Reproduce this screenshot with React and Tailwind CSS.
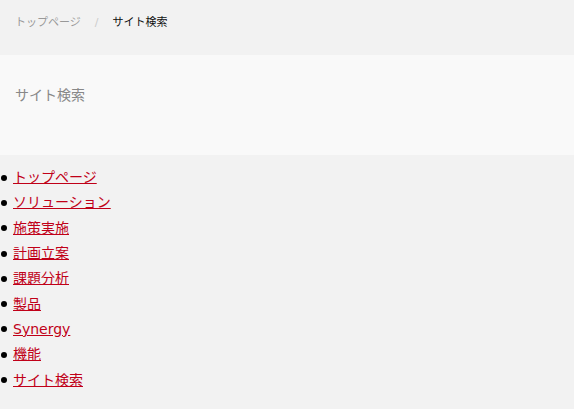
export default function App() {
  const links = [
    "トップページ",
    "ソリューション",
    "施策実施",
    "計画立案",
    "課題分析",
    "製品",
    "Synergy",
    "機能",
    "サイト検索",
  ];
  const font = { fontFamily: '"DejaVu Sans", "Noto Sans CJK JP", sans-serif' };
  return (
    <div className="min-h-[409px] bg-[#f2f2f2]" style={font}>
      <nav className="h-[55px] flex items-start pt-[15px] px-[15px] text-[11px]">
        <span className="text-[#999]">トップページ</span>
        <span className="text-[#ccc] mx-[14px]">/</span>
        <span className="text-[#111]">サイト検索</span>
      </nav>
      <div className="h-[100px] bg-[#f9f9f9] px-[15px] pt-[31px]">
        <h1 className="text-[14px] leading-[18px] text-[#888] font-normal">サイト検索</h1>
      </div>
      <ul className="pt-[10px] text-[14px]">
        {links.map((l) => (
          <li key={l} className="h-[25.3px] flex items-center">
            <span className="w-[6px] h-[6px] rounded-full bg-black ml-[1px] mr-[6px]" />
            <a href="#" className="text-[#c00018] underline">
              {l}
            </a>
          </li>
        ))}
      </ul>
    </div>
  );
}
